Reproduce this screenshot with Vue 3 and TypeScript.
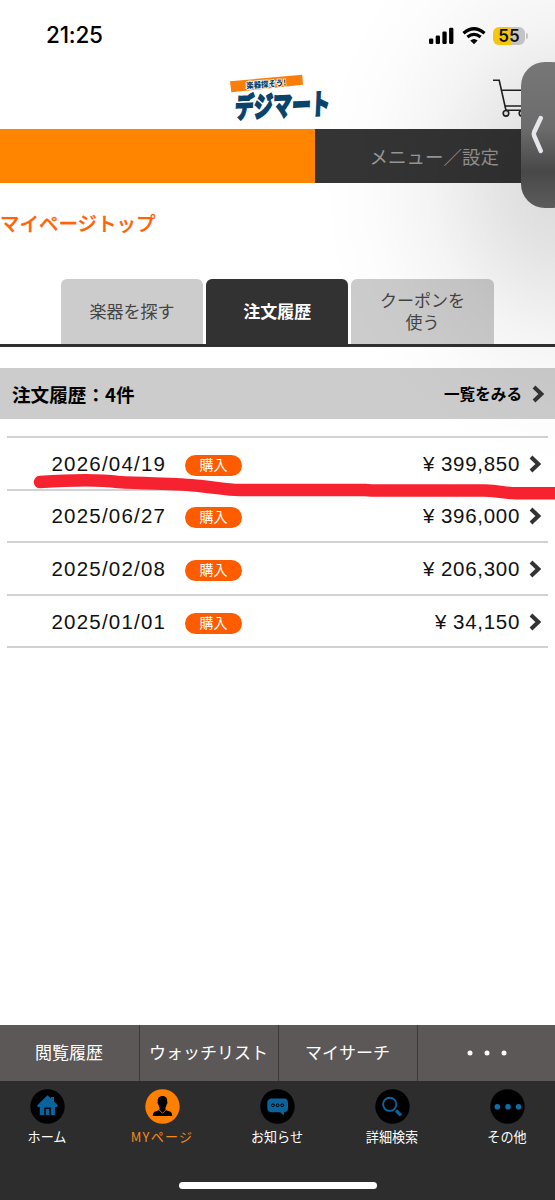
<script setup lang="ts">
interface Order {
  date: string
  price: string
}

const orders: Order[] = [
  { date: '2026/04/19', price: '399,850' },
  { date: '2025/06/27', price: '396,000' },
  { date: '2025/02/08', price: '206,300' },
  { date: '2025/01/01', price: '34,150' },
]

const shortcuts: string[] = ['閲覧履歴', 'ウォッチリスト', 'マイサーチ']
</script>

<template>
  <div class="screen">
    <div class="statusbar">
      <span class="clock">21:25</span>
      <div class="indicators">
        <svg class="signal" width="25" height="17" viewBox="0 0 25 17">
          <rect x="0" y="11.5" width="4.3" height="5.5" rx="1.3" />
          <rect x="6.7" y="8.5" width="4.3" height="8.5" rx="1.3" />
          <rect x="13.4" y="4.5" width="4.3" height="12.5" rx="1.3" />
          <rect x="20.1" y="0.8" width="4.3" height="16.2" rx="1.3" />
        </svg>
        <svg class="wifi" width="24" height="18" viewBox="0 0 24 18">
          <path d="M1.5 6.2Q12-2.6 22.5 6.2" fill="none" stroke="#000" stroke-width="3.3" />
          <path d="M5.4 10.1Q12 4.7 18.6 10.1" fill="none" stroke="#000" stroke-width="3.2" />
          <path d="M8.3 13.5Q12 10.5 15.7 13.5L12 17.3Z" />
        </svg>
        <div class="battery"><span>55</span></div>
        <i class="battery-tip"></i>
      </div>
    </div>

    <header class="brand">
      <svg class="logo" width="120" height="58" viewBox="0 0 120 58">
        <path d="M4 11.3L76.2 4.7 77 14.7 5.3 22.3Z" fill="#fb7e0b" />
        <g transform="translate(20.5 18.6) rotate(-4.5)">
          <text class="logo-tag" textLength="40" lengthAdjust="spacingAndGlyphs">楽器探そう!</text>
        </g>
        <g transform="translate(8.5 48) rotate(-2.5) skewX(-5)">
          <text class="logo-name" textLength="95" lengthAdjust="spacingAndGlyphs">デジマート</text>
        </g>
      </svg>
      <svg class="cart" width="40" height="42" viewBox="0 0 40 42">
        <g fill="none" stroke="#222" stroke-width="1.6">
          <path d="M1 3.2H7.2L14 33.5M9.5 13.2H39M13 29H38M14 33.2H38" />
          <circle cx="14" cy="36.3" r="2.8" fill="#eee" />
          <circle cx="30" cy="36.3" r="2.8" fill="#eee" />
        </g>
      </svg>
    </header>

    <nav class="topnav">
      <div class="topnav-active"></div>
      <div class="topnav-menu"><span>メニュー／設定</span></div>
    </nav>

    <div class="crumb"><span>マイページトップ</span></div>

    <div class="tabs">
      <div class="tab">楽器を探す</div>
      <div class="tab current">注文履歴</div>
      <div class="tab">クーポンを<br />使う</div>
    </div>

    <div class="section-head">
      <span class="count">注文履歴：4件</span>
      <span class="all">一覧をみる</span>
      <svg class="chev" width="12" height="18" viewBox="0 0 12 18"><path d="M2 2L9.3 9 2 16" /></svg>
    </div>

    <ul class="orders">
      <li v-for="o in orders" :key="o.date">
        <span class="date">{{ o.date }}</span>
        <span class="badge">購入</span>
        <span class="price"><span class="yen">¥</span>{{ o.price }}</span>
        <svg class="chev" width="12" height="18" viewBox="0 0 12 18"><path d="M2 2L9.3 9 2 16" /></svg>
      </li>
    </ul>

    <footer class="bottom">
      <div class="shortcuts">
        <div v-for="s in shortcuts" :key="s"><span>{{ s }}</span></div>
        <div>
          <svg width="42" height="6" viewBox="0 0 42 6" fill="#fff">
            <circle cx="4" cy="3" r="2.5" /><circle cx="21" cy="3" r="2.5" /><circle cx="38" cy="3" r="2.5" />
          </svg>
        </div>
      </div>
      <div class="tabbar">
        <div class="item">
          <svg width="35" height="35" viewBox="0 0 35 35">
            <circle cx="17.5" cy="17.5" r="17.2" />
            <path fill="#0b639c" d="M17.5 6.3L21 9.6V8H24V12.5L28 16.5 26.7 18H25V26H20.8V18.5H14.3V26H9.8V18H8L7 16.5Z" />
            <path fill="#0b639c" d="M15.7 20H19.4V26H15.7Z" />
          </svg>
          <span>ホーム</span>
        </div>
        <div class="item on">
          <svg width="35" height="35" viewBox="0 0 35 35">
            <circle cx="17.5" cy="17.5" r="17.2" fill="#ff7f00" />
            <path d="M17.5 7C21 7 22.4 9.3 22.2 12.5C22.9 13 22.3 15.2 21.5 15.7C21.2 17.5 20.4 18.3 20.4 19.5L20.7 21 25.5 22.8Q27.3 23.6 27.3 27H7.7Q7.7 23.6 9.5 22.8L14.3 21 14.6 19.5C14.6 18.3 13.8 17.5 13.5 15.7C12.7 15.2 12.1 13 12.8 12.5C12.6 9.3 14 7 17.5 7Z" />
            <path d="M14 20.8L17.5 24.3 21 20.8" fill="none" stroke="#ff7f00" stroke-width="0.8" />
          </svg>
          <span>MYページ</span>
        </div>
        <div class="item">
          <svg width="35" height="35" viewBox="0 0 35 35">
            <circle cx="17.5" cy="17.5" r="17.2" />
            <path fill="#0b639c" d="M12 9.5H24Q28 9.5 28 14V19Q28 23 24.3 23.2L23.5 26.2 20.2 23.2H12Q7.3 23.2 7.3 19V14Q7.3 9.5 12 9.5Z" />
            <g fill="none" stroke="#000"><circle cx="13" cy="16.3" r="1.4" /><circle cx="17.6" cy="16.3" r="1.4" /><circle cx="22.2" cy="16.3" r="1.4" /></g>
          </svg>
          <span>お知らせ</span>
        </div>
        <div class="item">
          <svg width="35" height="35" viewBox="0 0 35 35">
            <circle cx="17.5" cy="17.5" r="17.2" />
            <circle cx="14.7" cy="15.3" r="6.6" fill="none" stroke="#0b639c" stroke-width="1.9" />
            <path d="M21 21.5L26 26.3" stroke="#0b639c" stroke-width="3.2" />
          </svg>
          <span>詳細検索</span>
        </div>
        <div class="item">
          <svg width="35" height="35" viewBox="0 0 35 35">
            <circle cx="17.5" cy="17.5" r="17.2" />
            <g fill="#0b6fac"><circle cx="7.3" cy="17.8" r="2.8" /><circle cx="18" cy="17.8" r="2.8" /><circle cx="28.5" cy="17.8" r="2.8" /></g>
          </svg>
          <span>その他</span>
        </div>
      </div>
      <div class="home-indicator"></div>
    </footer>

    <div class="glow"></div>
    <svg class="marker" width="555" height="40" viewBox="0 0 555 40">
      <path d="M40 12C70 10 95 9 118 12C150 14 175 13 200 16C220 18 225 20 240 20H365C375 21 380 20.5 390 20.5H485C500 21 505 23.3 516 23.3H565" />
    </svg>
    <div class="handle">
      <svg width="14" height="40" viewBox="0 0 14 40"><path d="M10.8 3L4.2 17Q3.4 19 4.2 21L10.8 36" /></svg>
    </div>
  </div>
</template>

<style>
body {
  margin: 0;
}
</style>

<style scoped>
.screen {
  position: relative;
  width: 555px;
  height: 1200px;
  overflow: hidden;
  display: flex;
  flex-direction: column;
  background: #fff;
  color: #111;
  font-family: "Liberation Sans", "Noto Sans CJK JP", sans-serif;
}
.statusbar {
  height: 70px;
  box-sizing: border-box;
  padding: 1px 27px 0 46px;
  display: flex;
  align-items: center;
  justify-content: space-between;
}
.clock {
  font: 500 22.5px/1 Inter, sans-serif;
  letter-spacing: -0.2px;
  color: #000;
}
.indicators {
  display: flex;
  align-items: center;
}
.wifi {
  margin: 0 7px 0 8px;
}
.battery {
  width: 32px;
  height: 18px;
  border-radius: 6px;
  background: linear-gradient(90deg, #ffcf0c 55%, #cdcdcd 55%);
  font: 600 17px/18px Inter, sans-serif;
  text-align: center;
  color: #111;
}
.battery-tip {
  width: 2px;
  height: 6px;
  margin-left: 1px;
  border-radius: 0 2px 2px 0;
  background: #cdcdcd;
}
.brand {
  height: 59px;
  display: flex;
  align-items: flex-start;
  padding-left: 226px;
}
.logo {
  flex: none;
}
.logo-tag {
  font: 900 8px "Noto Sans CJK JP", sans-serif;
  fill: #07436b;
  stroke: #fff;
  stroke-width: 1.6px;
  paint-order: stroke;
}
.logo-name {
  font: 900 28px "Noto Sans CJK JP", sans-serif;
  fill: #07436b;
  stroke: #07436b;
  stroke-width: 1.5px;
}
.cart {
  margin: 7px 0 0 146px;
  flex: none;
}
.topnav {
  height: 54px;
  display: flex;
}
.topnav-active {
  width: 314.5px;
  background: #ff8400;
}
.topnav-menu {
  flex: 1;
  display: flex;
  align-items: center;
  justify-content: center;
  background: #343434;
  color: #999;
  font-size: 18.5px;
}
.topnav-menu span {
  margin: 0 1px 1px 0;
}
.crumb {
  height: 96px;
  font-weight: 500;
  font-size: 19.5px;
  line-height: 83px;
  color: #ff6208;
  -webkit-text-stroke: 0.3px #ff6208;
}
.tabs {
  height: 65px;
  display: flex;
  gap: 3px;
  padding-left: 61px;
  border-bottom: 3px solid #303030;
}
.tab {
  width: 142.2px;
  display: flex;
  align-items: center;
  justify-content: center;
  text-align: center;
  padding-top: 2px;
  box-sizing: border-box;
  border-radius: 6px 6px 0 0;
  background: #ccc;
  color: #444;
  font-size: 17px;
  line-height: 22px;
}
.tab.current {
  background: #323232;
  color: #fff;
  font-weight: 700;
}
.section-head {
  height: 51px;
  margin-top: 21px;
  padding: 0 11px 0 12px;
  display: flex;
  align-items: center;
  background: #ccc;
  font-family: "Noto Sans CJK JP", sans-serif;
  font-weight: 700;
  color: #000;
}
.section-head span {
  padding-bottom: 1px;
}
.count {
  font-size: 18.6px;
  flex: 1;
}
.all {
  font-size: 15.6px;
  margin-right: 10px;
}
.chev {
  flex: none;
}
.chev path {
  fill: none;
  stroke: #333;
  stroke-width: 4px;
}
.orders {
  list-style: none;
  margin: 17px 7px 0;
  padding: 0;
  border-top: 2px solid #d2d2d2;
}
.orders li {
  height: 52.6px;
  box-sizing: border-box;
  display: flex;
  align-items: center;
  padding: 1px 7px 0 44.5px;
  border-bottom: 2px solid #d2d2d2;
}
.date {
  width: 133.5px;
  font-size: 20.5px;
  letter-spacing: 1.2px;
}
.badge {
  width: 57px;
  height: 21px;
  margin-top: 3px;
  border-radius: 11px;
  background: #ff5c00;
  color: #fff;
  font-size: 14px;
  line-height: 21px;
  text-align: center;
}
.price {
  flex: 1;
  text-align: right;
  margin-right: 9px;
  font-size: 20.5px;
  letter-spacing: 0.7px;
}
.yen {
  margin-right: 6px;
}
.bottom {
  margin-top: auto;
  height: 175px;
  background: #2d2d2d;
}
.shortcuts {
  height: 56px;
  display: grid;
  grid-template-columns: 140px 139px 139px 1fr;
  background: #5c5857;
  color: #fff;
  font-size: 17px;
}
.shortcuts > div {
  display: flex;
  align-items: center;
  justify-content: center;
  border-right: 1px solid #3c3939;
}
.shortcuts span {
  padding: 0 1px 3px 0;
}
.shortcuts > div:last-child {
  border: 0;
}
.tabbar {
  height: 104px;
  box-sizing: border-box;
  padding: 8px 0 0 0;
  display: grid;
  grid-template-columns: 94px 136px 94px 136px 94px;
}
.item {
  display: flex;
  flex-direction: column;
  align-items: center;
  font-family: "Noto Sans CJK JP", sans-serif;
  font-size: 13.1px;
  line-height: 16px;
  color: #fff;
  gap: 5px;
}
.item.on {
  color: #f18a1c;
}
.item.on span {
  letter-spacing: 1.2px;
}
.home-indicator {
  width: 198px;
  height: 7px;
  margin: -3px auto 0;
  border-radius: 4px;
  background: #fff;
}
.glow {
  position: absolute;
  inset: 0 0 auto auto;
  width: 290px;
  height: 480px;
  background: radial-gradient(ellipse 245px 285px at 300px 180px, rgba(0, 0, 0, 0.15), rgba(0, 0, 0, 0.11) 25%, rgba(0, 0, 0, 0.045) 55%, rgba(0, 0, 0, 0.012) 80%, transparent);
}
.marker {
  position: absolute;
  left: 0;
  top: 470px;
}
.marker path {
  fill: none;
  stroke: #f6222f;
  stroke-width: 12.5px;
  stroke-linecap: round;
}
.handle {
  position: absolute;
  left: 521px;
  top: 62px;
  width: 54px;
  height: 146px;
  box-sizing: border-box;
  padding: 53px 0 0 9px;
  border-radius: 24px;
  background: linear-gradient(#777 0%, #6c6c6c 45%, #484848 75%, #5c5c5c 100%);
}
.handle path {
  fill: none;
  stroke: #e6e6ea;
  stroke-width: 4.5px;
  stroke-linecap: round;
}
</style>
